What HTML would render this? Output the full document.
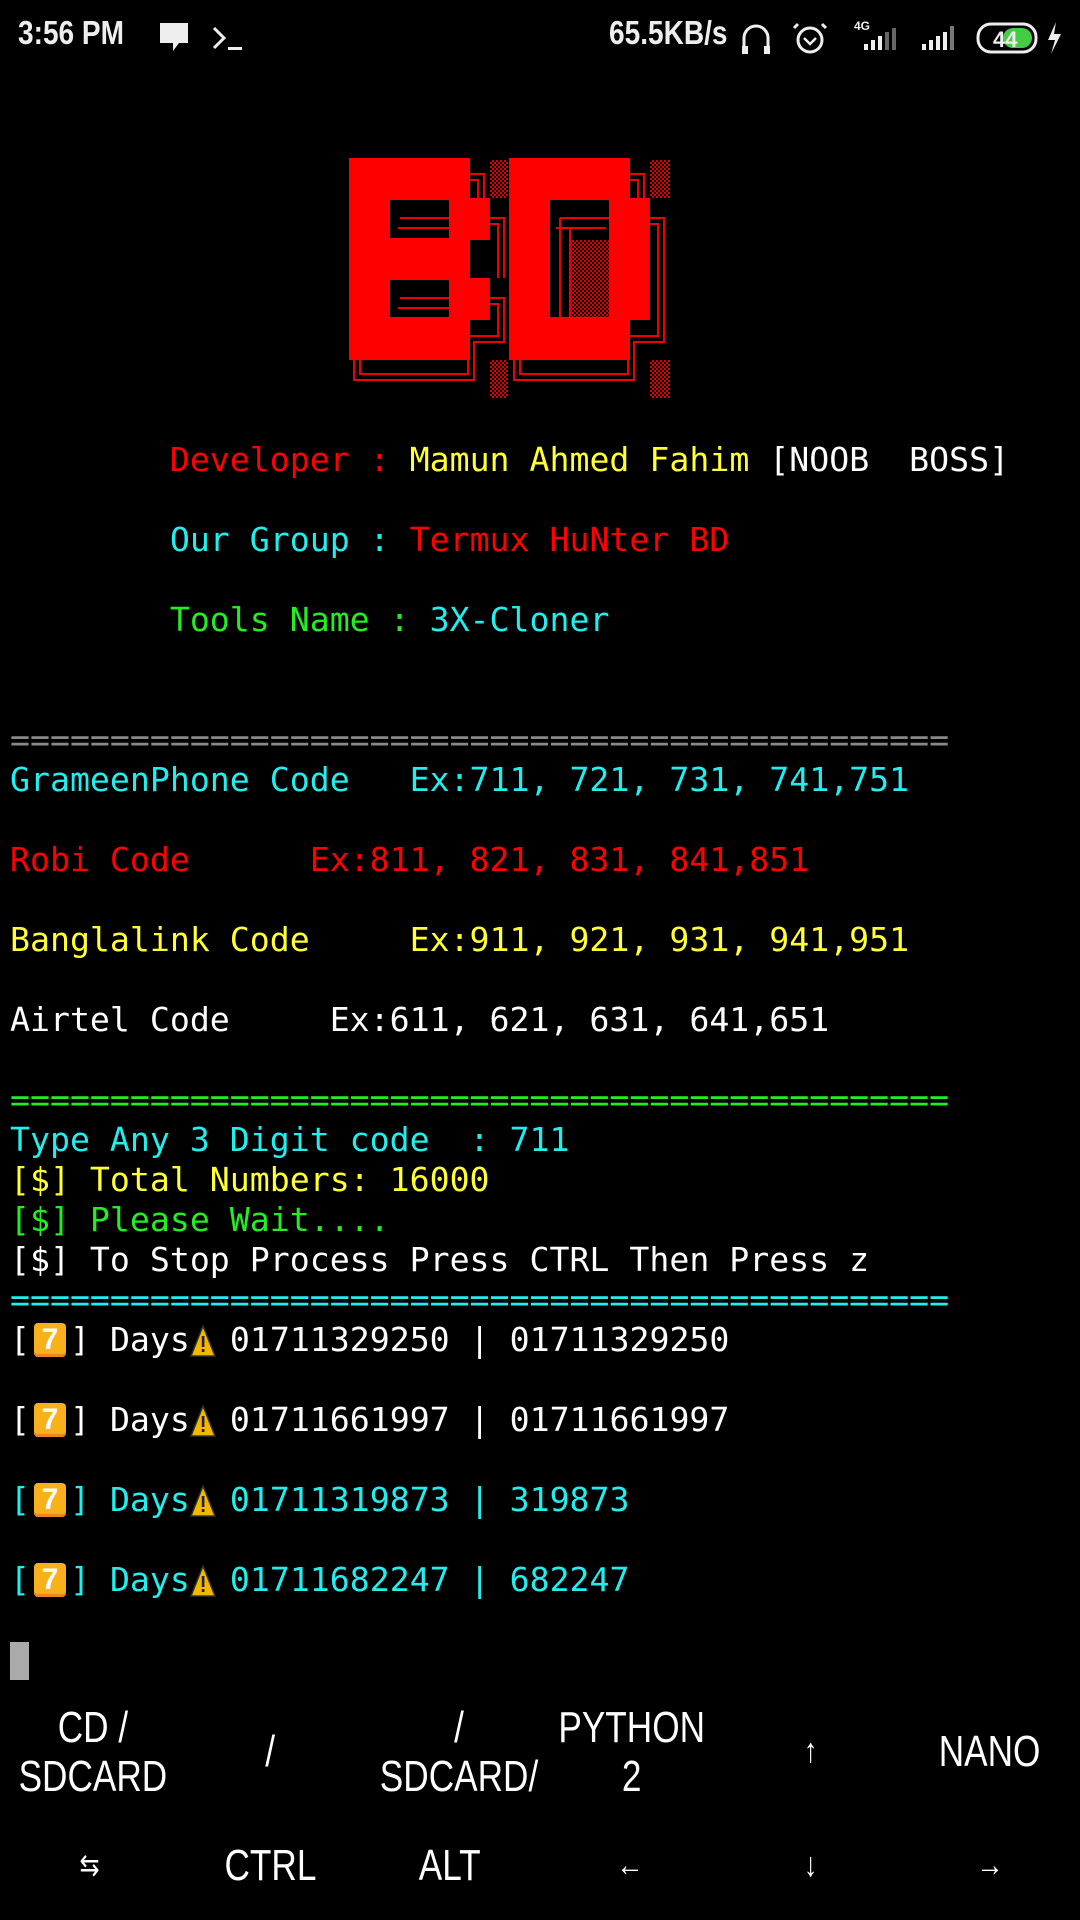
<!DOCTYPE html>
<html><head><meta charset="utf-8"><style>
html,body{margin:0;padding:0;background:#000;}
body{width:1080px;height:1920px;position:relative;overflow:hidden;color:#fff;}
.sb{position:absolute;top:14px;font-family:"Liberation Sans",sans-serif;font-size:33px;font-weight:bold;color:#eee;transform:scaleX(0.85);transform-origin:left center;}
pre{position:absolute;left:10px;top:440px;margin:0;font-family:"DejaVu Sans Mono","Liberation Mono",monospace;font-size:33.2px;line-height:40px;white-space:pre;}
.r{color:#f00}.y{color:#ff3}.c{color:#2ee}.g{color:#2e2}.w{color:#fff}
.k{display:inline-block;width:32px;height:34px;margin:3px 4px 0;background:#f7b21b;border-radius:4px;box-shadow:inset 0 -3px 0 #e8891a;color:#fff;font-weight:bold;text-align:center;line-height:34px;font-family:"Liberation Sans",sans-serif;font-size:30px;vertical-align:top;}
.t{display:inline-block;width:40px;height:32px;vertical-align:top;margin-top:5px;}
.key{position:absolute;width:180px;text-align:center;font-family:"Liberation Sans",sans-serif;font-size:44px;line-height:49px;color:#fff;}
.key span{display:inline-block;transform:scaleX(0.8);white-space:nowrap;}
</style></head><body>
<div class="sb" style="left:18px">3:56 PM</div>
<svg style="position:absolute;left:158px;top:20px" width="90" height="36"><path d="M2 3h28v20h-9l-6 8v-8h-13z" fill="#eee"/><path d="M56 8l10 10-10 10" stroke="#eee" stroke-width="3" fill="none"/><rect x="70" y="27" width="14" height="3" fill="#eee"/></svg>
<div class="sb" style="left:609px">65.5KB/s</div>
<svg style="position:absolute;left:740px;top:16px" width="340" height="42">
<path d="M4 34v-12a12 12 0 0 1 24 0v12" stroke="#eee" stroke-width="3" fill="none"/><rect x="2" y="30" width="6" height="8" fill="#eee"/><rect x="24" y="30" width="6" height="8" fill="#eee"/>
<circle cx="70" cy="24" r="12" stroke="#eee" stroke-width="3" fill="none"/><path d="M64 22l6 6 6-6" stroke="#eee" stroke-width="2.5" fill="none"/><path d="M58 8l-4 4M82 8l4 4" stroke="#eee" stroke-width="3"/>
<text x="114" y="14" font-size="12" fill="#eee" font-family="Liberation Sans" font-weight="bold">4G</text>
<path d="M124 34h4v-6h-4zM131 34h4v-10h-4zM138 34h4v-14h-4z" fill="#eee"/><path d="M145 34h4v-18h-4zM152 34h4v-22h-4z" fill="#666"/>
<path d="M182 34h4v-6h-4zM189 34h4v-10h-4zM196 34h4v-14h-4zM203 34h4v-18h-4z" fill="#eee"/><path d="M210 34h4v-24h-4z" fill="#777"/>
<rect x="238" y="8" width="58" height="28" rx="13" stroke="#eee" stroke-width="3" fill="none"/><rect x="263" y="12" width="29" height="20" rx="10" fill="#4c4"/><text x="253" y="31" font-size="22" fill="#eee" font-family="Liberation Sans" font-weight="bold">44</text>
<path d="M316 6l-8 18h7l-4 14 10-20h-7z" fill="#eee"/>
</svg>
<svg style="position:absolute;left:0;top:0" width="1080" height="420">
<defs><pattern id="d" width="4" height="4" patternUnits="userSpaceOnUse"><rect width="2" height="2" fill="#d00"/><rect x="2" y="2" width="2" height="2" fill="#d00"/></pattern></defs>
<g fill="none" stroke="#e00" stroke-width="2">
<path d="M470 174h14v26M470 180h8v18M490 218h14v60M490 224h8v54M490 298h14v44h-30v38h-120v-30M490 304h8v32h-30v38h-108v-24"/>
<path d="M400 218h60M398 228h60v10M400 298h60M398 308h60v10"/>
<path d="M630 174h14v26M630 180h8v18M650 218h14v124h-30v38h-120v-30M650 224h8v112h-30v38h-108v-24"/>
<path d="M560 218h50M556 228h50M560 218v100M570 228v90"/>
</g>
<path fill="#f00" fill-rule="evenodd" d="M349 158h121v40h20v42h-20v38h20v42h-20v40h-121zM390 200v38h59v-38zM390 280v37h59v-37z"/>
<path fill="#f00" fill-rule="evenodd" d="M509 158h121v40h20v122h-20v40h-121zM550 200v117h59v-117z"/>
<rect x="570" y="240" width="39" height="77" fill="url(#d)"/>
<rect x="490" y="160" width="18" height="38" fill="url(#d)"/><rect x="490" y="360" width="18" height="38" fill="url(#d)"/>
<rect x="650" y="160" width="20" height="38" fill="url(#d)"/><rect x="650" y="360" width="20" height="38" fill="url(#d)"/>
</svg>
<pre><span class="r">        Developer : </span><span class="y">Mamun Ahmed Fahim </span><span class="w">[NOOB  BOSS]</span>

<span class="c">        Our Group : </span><span class="r">Termux HuNter BD</span>

<span class="g">        Tools Name : </span><span class="c">3X-Cloner</span>


<span style="color:#888">===============================================</span>
<span class="c">GrameenPhone Code   Ex:711, 721, 731, 741,751</span>

<span class="r">Robi Code      Ex:811, 821, 831, 841,851</span>

<span class="y">Banglalink Code     Ex:911, 921, 931, 941,951</span>

<span class="w">Airtel Code     Ex:611, 621, 631, 641,651</span>

<span class="g">===============================================</span>
<span class="c">Type Any 3 Digit code  : 711</span>
<span class="y">[$] Total Numbers: 16000</span>
<span class="g">[$] Please Wait....</span>
<span class="w">[$] To Stop Process Press CTRL Then Press z</span>
<span class="c">===============================================</span>
<span class="w">[<span class="k">7</span>] Days<svg class="t" viewBox="0 0 40 32"><path d="M13 1L1 31h24z" fill="#f5b800" stroke="#333" stroke-width="1.5"/><rect x="11.8" y="11" width="2.6" height="11" fill="#222"/><rect x="11.8" y="24" width="2.6" height="3" fill="#222"/></svg>01711329250 | 01711329250</span>

<span class="w">[<span class="k">7</span>] Days<svg class="t" viewBox="0 0 40 32"><path d="M13 1L1 31h24z" fill="#f5b800" stroke="#333" stroke-width="1.5"/><rect x="11.8" y="11" width="2.6" height="11" fill="#222"/><rect x="11.8" y="24" width="2.6" height="3" fill="#222"/></svg>01711661997 | 01711661997</span>

<span class="c">[<span class="k">7</span>] Days<svg class="t" viewBox="0 0 40 32"><path d="M13 1L1 31h24z" fill="#f5b800" stroke="#333" stroke-width="1.5"/><rect x="11.8" y="11" width="2.6" height="11" fill="#222"/><rect x="11.8" y="24" width="2.6" height="3" fill="#222"/></svg>01711319873 | 319873</span>

<span class="c">[<span class="k">7</span>] Days<svg class="t" viewBox="0 0 40 32"><path d="M13 1L1 31h24z" fill="#f5b800" stroke="#333" stroke-width="1.5"/><rect x="11.8" y="11" width="2.6" height="11" fill="#222"/><rect x="11.8" y="24" width="2.6" height="3" fill="#222"/></svg>01711682247 | 682247</span>
</pre>
<div style="position:absolute;left:10px;top:1642px;width:19px;height:38px;background:#aaa"></div>
<div class="key" style="left:0;top:1703px"><span>CD /<br>SDCARD</span></div>
<div class="key" style="left:180px;top:1727px"><span>/</span></div>
<div class="key" style="left:360px;top:1703px"><span>/<br>SDCARD/</span></div>
<div class="key" style="left:540px;top:1703px"><span>PYTHON<br>2</span></div>
<div class="key" style="left:720px;top:1727px;font-size:34px"><span>↑</span></div>
<div class="key" style="left:900px;top:1727px"><span>NANO</span></div>
<div class="key" style="left:0;top:1841px;font-size:30px"><span>⇆</span></div>
<div class="key" style="left:180px;top:1841px"><span>CTRL</span></div>
<div class="key" style="left:360px;top:1841px"><span>ALT</span></div>
<div class="key" style="left:540px;top:1841px;font-size:34px"><span>←</span></div>
<div class="key" style="left:720px;top:1841px;font-size:34px"><span>↓</span></div>
<div class="key" style="left:900px;top:1841px;font-size:34px"><span>→</span></div>
</body></html>
